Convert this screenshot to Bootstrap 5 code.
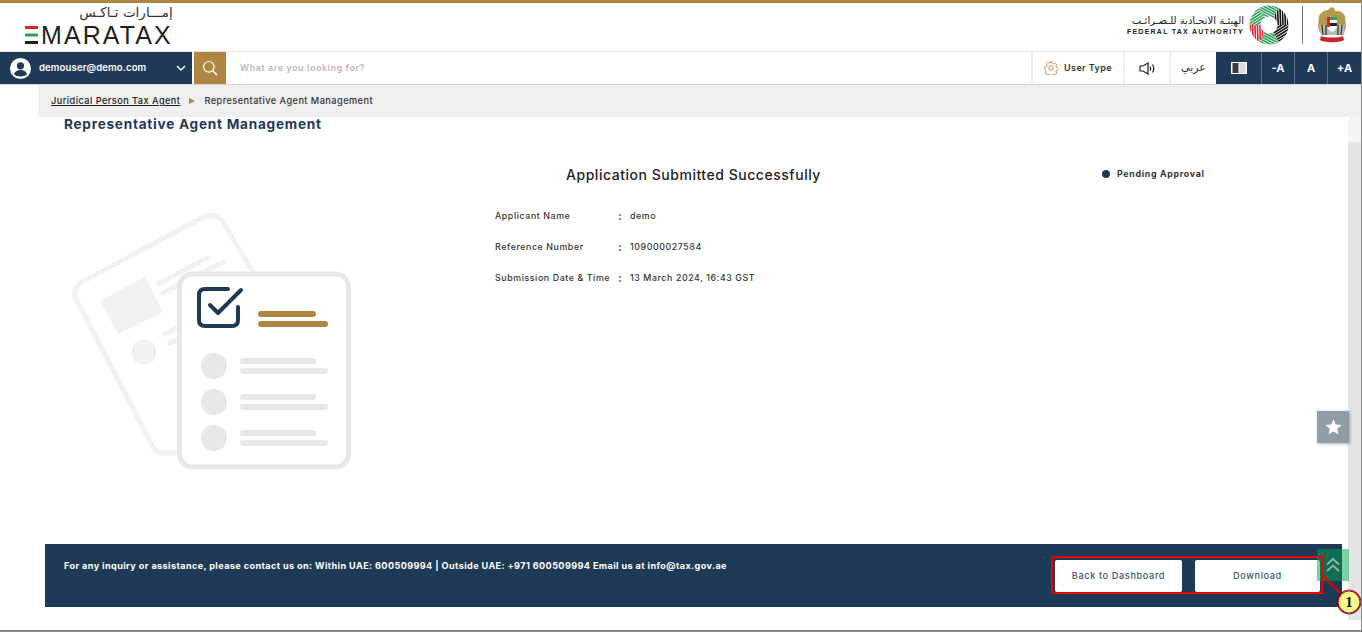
<!DOCTYPE html>
<html lang="en">
<head>
<meta charset="utf-8">
<title>Representative Agent Management</title>
<link href="https://cdn.jsdelivr.net/npm/bootstrap@5.3.0/dist/css/bootstrap.min.css" rel="stylesheet">
<style>
html,body{height:632px;overflow:hidden}
body{position:relative;font-family:Inter,"Open Sans","DejaVu Sans",sans-serif;color:#222;background:#fff;border-bottom:2px solid #8a8a8a;border-right:1px solid #8a8a8a}
.head-top{height:51px;border-top:3px solid #ae8641;padding:0 14px 4px 25px}
.logo-block{align-self:flex-start}
.logo-ar{font-family:"DejaVu Sans",sans-serif;font-size:13.5px;line-height:16px;text-align:right;color:#333;padding-top:1px}
.logo-en{font-family:"Liberation Sans",sans-serif;font-size:25px;line-height:22px;letter-spacing:2.1px;color:#231f20;gap:2px;margin-top:4px}
.fta-ar{font-family:"DejaVu Sans",sans-serif;font-size:10px;line-height:13px;color:#222;text-align:right}
.fta-en{font-family:"Liberation Sans",sans-serif;font-size:7px;letter-spacing:1.25px;line-height:9px;color:#222;font-weight:700;white-space:nowrap}
.fta-text{margin-right:5px}
.vsep{width:1px;height:38px;background:#777;margin:0 14px 0 13px}
.toolbar{height:34px;border-top:1px solid #e2e2e2;border-bottom:1px solid #d5d5d5}
.user-cell{width:192px;background:#1f3a57;color:#fff;font-size:9.6px;font-weight:600;letter-spacing:.1px;padding:0 6px 0 10px}
.search-cell{width:32px;margin-left:2px;background:#ae8641}
.search-txt{font-size:9px;font-weight:600;color:#b9b9b9;padding-left:14px;letter-spacing:.55px}
.t-cell{border-left:2px solid #efefef;font-size:9px;font-weight:600;color:#333}
.t-user{width:92px;gap:6px;letter-spacing:.4px}
.t-sound{width:46px}
.t-lang{width:47px;font-family:"DejaVu Sans",sans-serif;font-weight:400;font-size:11px}
.n-cell{background:#1f3a57;color:#fff;font-size:11px;font-weight:700;border-left:1px solid #5c7086}
.n-contrast{width:45px;border-left:0}
.n-small{width:33px}
.n-last{width:34px}
.crumb-band{height:32px;margin-left:38px;background:#efefef;font-size:9.2px;font-weight:500;letter-spacing:.45px;padding-left:13px;gap:9px;color:#333}
.crumb-band a{color:#222}
.crumb-arrow{width:0;height:0;border-left:6px solid #ae8641;border-top:3.5px solid transparent;border-bottom:3.5px solid transparent}
.main-wrap{height:514px}
.page-title{font-size:13.6px;font-weight:700;color:#1f3a57;padding-left:64px;line-height:15px;letter-spacing:.75px}
.content-zone{padding-top:34px}
.art-col{width:495px;padding:39px 0 0 70px}
.info-col{width:340px}
.done-title{font-size:14px;font-weight:500;letter-spacing:.53px;color:#222;line-height:18px;text-align:center;margin-bottom:25px;padding-left:57px;white-space:nowrap}
.info-row{font-size:8.8px;font-weight:500;height:31px;line-height:14px;letter-spacing:.6px;color:#333}
.info-k{width:123px}
.info-c{width:12px;font-weight:700;font-size:11px}
.status-col{padding:0 0 0 267px;font-size:8.8px;font-weight:700;letter-spacing:.7px;color:#333;gap:7px;line-height:16px;white-space:nowrap;height:18px;margin-top:-1px}
.status-dot{width:8px;height:8px;border-radius:50%;background:#1f3a57}
.foot-bar{position:absolute;left:45px;top:544px;width:1297px;height:63px;background:#1f3a57;color:#fff;font-size:9.1px;font-weight:700;letter-spacing:.4px;padding:15px 22px 0 19px}
.foot-btns{gap:13px;margin-top:1px}
.foot-btn{width:127px;height:32px;font-size:9.2px;font-weight:500;color:#42566e;letter-spacing:.6px;border-radius:2px;border:0;padding:0}
.foot-btn-b{width:125px}
.rail-top{position:absolute;right:0;top:116px;width:13px;height:26px;background:#f5f5f5}
.rail{position:absolute;right:0;top:142px;width:13px;height:478px;background:#e4e4e4}
.float-star{position:absolute;left:1317px;top:411px;width:32px;height:32px;background:#8f9dab;box-shadow:1px 1px 3px rgba(0,0,0,.3)}
.float-top{position:absolute;left:1317px;top:549px;width:32px;height:32px;background:rgba(0,160,80,.5)}
.note-frame{position:absolute;left:1051px;top:556px;width:272px;height:38px;border:2.5px solid #ee0000;pointer-events:none}
.note-line{position:absolute;left:0;top:0;width:1362px;height:632px;pointer-events:none}
</style>
</head>
<body>
<header class="head-top d-flex justify-content-between align-items-center">
  <div class="logo-block">
    <div class="logo-ar" dir="rtl">إمـــارات تـاكـس</div>
    <div class="logo-en d-flex align-items-center">
      <svg width="14" height="18" viewBox="0 0 14 18"><rect y="0" width="13" height="3" fill="#d8232a"/><rect y="7.500" width="13" height="3" fill="#2f9e58"/><rect y="15" width="13" height="3" fill="#231f20"/></svg>
      <span>MARATAX</span>
    </div>
  </div>
  <div class="d-flex align-items-center">
    <div class="fta-text">
      <div class="fta-ar" dir="rtl">الهيئـة الاتحـادية للـضـرائـب</div>
      <div class="fta-en">FEDERAL TAX AUTHORITY</div>
    </div>
    <svg width="40" height="40" viewBox="-20 -20 40 40" fill="none" stroke-width="1.600">
      <defs>
        <mask id="annulus"><circle r="19.500" fill="#fff"/><circle r="8.500" fill="#000"/></mask>
        <clipPath id="wedge"><path d="M0 0L-14.400-25H14.400z"/></clipPath>
        <g id="blade" clip-path="url(#wedge)"><path transform="rotate(28)" d="M-30 -2H30M-30 -4.400H30M-30 -6.800H30M-30 -9.200H30M-30 -11.600H30M-30 -14H30M-30 -16.400H30M-30 -18.800H30M-30 -21.200H30M-30 -23.600H30"/></g>
      </defs>
      <g mask="url(#annulus)">
        <use href="#blade" stroke="#2f9e58"/>
        <use href="#blade" stroke="#111" transform="rotate(60)"/>
        <use href="#blade" stroke="#111" transform="rotate(120)"/>
        <use href="#blade" stroke="#2f9e58" transform="rotate(180)"/>
        <use href="#blade" stroke="#e5232e" transform="rotate(240)"/>
        <use href="#blade" stroke="#2f9e58" transform="rotate(300)"/>
      </g>
    </svg>
    <div class="vsep"></div>
    <svg width="30" height="38" viewBox="0 0 30 38">
      <path d="M11 4l3-3 3 1 1 3c4-1 8 1 10 5l1 12-2 5H3l-2-6 1-11c2-4 5-6 9-6z" fill="#b89a4e"/>
      <path d="M2 19h26l-1 10H4z" fill="#b9b9b0"/>
      <path d="M5 19l1 10M9 19v10M21 19v10M25 19l-1 10" stroke="#3a3a2a" stroke-width="1.300"/>
      <path d="M10 11h10v9c0 3-3 5-5 6-2-1-5-3-5-6z" fill="#fff"/>
      <rect x="13" y="11" width="7" height="3" fill="#2f9e58"/><rect x="13" y="17" width="7" height="3" fill="#222"/>
      <rect x="10" y="11" width="3" height="10" fill="#d8232a"/>
      <path d="M4 30c4 2 18 2 22 0l1 4c-4 3-20 3-24 0z" fill="#c9252c"/>
    </svg>
  </div>
</header>
<nav class="toolbar d-flex align-items-stretch">
  <div class="user-cell d-flex align-items-center">
    <svg width="21" height="21" viewBox="0 0 21 21" class="me-2"><circle cx="10.500" cy="10.500" r="10.500" fill="#fff"/><circle cx="10.500" cy="7.800" r="3.600" fill="#1f3a57"/><path d="M4 16.500c1-3.600 3.500-4.600 6.500-4.600s5.500 1 6.500 4.600c-3.500 2.600-9.500 2.600-13 0z" fill="#1f3a57"/></svg>
    <span class="flex-grow-1">demouser@demo.com</span>
    <svg width="10" height="7" viewBox="0 0 10 7" fill="none" stroke="#fff" stroke-width="1.400"><path d="M1 1l4 4 4-4"/></svg>
  </div>
  <div class="search-cell d-flex align-items-center justify-content-center">
    <svg width="16" height="16" viewBox="0 0 16 16" fill="none" stroke="#fff" stroke-width="1.200"><circle cx="6.800" cy="6.800" r="5.300"/><path d="M10.700 10.700l4.300 4.300" stroke-width="1.600"/></svg>
  </div>
  <div class="search-txt flex-grow-1 d-flex align-items-center">What are you looking for?</div>
  <div class="t-cell t-user d-flex align-items-center justify-content-center">
    <svg width="14" height="14" viewBox="0 0 14 14" fill="none" stroke="#b98a4e" stroke-width=".9"><circle cx="7" cy="7" r="2.300"/><path d="M6 .8h2l.4 1.700 1.500.6 1.500-.9 1.400 1.400-.9 1.500.6 1.500 1.700.4v2l-1.700.4-.6 1.500.9 1.500-1.400 1.400-1.500-.9-1.500.6-.4 1.200H6l-.4-1.200-1.500-.6-1.500.9-1.400-1.400.9-1.500-.6-1.500L.8 8V6l1.700-.4.6-1.500-.9-1.500 1.400-1.400 1.500.9 1.500-.6z"/></svg>
    <span>User Type</span>
  </div>
  <div class="t-cell t-sound d-flex align-items-center justify-content-center">
    <svg width="17" height="13" viewBox="0 0 17 13" fill="none" stroke="#222" stroke-width="1.200"><path d="M1 4h3l5-3v11l-5-3H1z"/><path d="M11 4.500c.8 1.200.8 2.800 0 4M13.500 2.500c1.500 2.400 1.500 5.600 0 8"/></svg>
  </div>
  <div class="t-cell t-lang d-flex align-items-center justify-content-center" dir="rtl">عربي</div>
  <div class="n-cell n-contrast d-flex align-items-center justify-content-center">
    <svg width="16" height="12" viewBox="0 0 16 12"><rect width="16" height="12" fill="#fff"/><rect x="1.500" y="1" width="6" height="10" fill="#3d3d3d"/><rect x="8.500" y="1" width="6" height="10" fill="#d9d9d9"/></svg>
  </div>
  <div class="n-cell n-small d-flex align-items-center justify-content-center">-A</div>
  <div class="n-cell n-small d-flex align-items-center justify-content-center">A</div>
  <div class="n-cell n-last d-flex align-items-center justify-content-center">+A</div>
</nav>
<div class="crumb-band d-flex align-items-center">
  <a href="#">Juridical Person Tax Agent</a><span class="crumb-arrow"></span><span>Representative Agent Management</span>
</div>
<main class="main-wrap">
  <h1 class="page-title m-0">Representative Agent Management</h1>
  <div class="content-zone d-flex">
    <div class="art-col">
      <svg width="284" height="270" viewBox="70 205 284 270" fill="none">
        <path d="M253 272L223 222q-8-9-18-6L82 282q-9 6-7 15L153 447q5 7 12 6h12" stroke="#f1f1f1" stroke-width="5" stroke-linecap="round" stroke-linejoin="round"/>
        <path d="M100 301l45-24 18 35-45 22z" fill="#f1f1f1"/>
        <path d="M158 284l49-26M163 293l60-31M165 334l12-6M170 343l7-3" stroke="#f1f1f1" stroke-width="5" stroke-linecap="round"/>
        <circle cx="144" cy="352" r="13" fill="#f1f1f1"/>
        <rect x="179.500" y="274" width="169" height="193" rx="13" fill="#fff" stroke="#e7e7e7" stroke-width="5"/>
        <path d="M228 289H205q-6 0-6 6V320q0 6 6 6H232q6 0 6-6V307" stroke="#1f3a57" stroke-width="4" stroke-linecap="round"/>
        <path d="M210 305l8 8 23-23" stroke="#1f3a57" stroke-width="4" stroke-linecap="round" stroke-linejoin="round"/>
        <path d="M261 314H313M261 324H325" stroke="#ae8641" stroke-width="6" stroke-linecap="round"/>
        <g fill="#e7e7e7"><circle cx="214" cy="366" r="13"/><circle cx="214" cy="402" r="13"/><circle cx="214" cy="438" r="13"/></g>
        <path d="M243 361H313M243 371H325M243 397H313M243 407H325M243 433H313M243 443H325" stroke="#e7e7e7" stroke-width="6" stroke-linecap="round"/>
      </svg>
    </div>
    <div class="info-col">
      <div class="done-title">Application Submitted Successfully</div>
      <div class="info-row d-flex"><span class="info-k">Applicant Name</span><span class="info-c">:</span><span>demo</span></div>
      <div class="info-row d-flex"><span class="info-k">Reference Number</span><span class="info-c">:</span><span>109000027584</span></div>
      <div class="info-row d-flex"><span class="info-k">Submission Date &amp; Time</span><span class="info-c">:</span><span>13 March 2024, 16:43 GST</span></div>
    </div>
    <div class="status-col d-flex align-items-center"><span class="status-dot"></span><span>Pending Approval</span></div>
  </div>
</main>
<div class="rail-top"></div>
<div class="rail"></div>
<div class="foot-bar d-flex justify-content-between align-items-start">
  <div>For any inquiry or assistance, please contact us on: Within UAE: 600509994 | Outside UAE: +971 600509994 Email us at info@tax.gov.ae</div>
  <div class="foot-btns d-flex">
    <button type="button" class="btn btn-light bg-white foot-btn">Back to Dashboard</button>
    <button type="button" class="btn btn-light bg-white foot-btn foot-btn-b">Download</button>
  </div>
</div>
<div class="float-star d-flex align-items-center justify-content-center">
  <svg width="17" height="16" viewBox="0 0 17 16"><path d="M8.500 0l2.300 5.400 5.700.5-4.300 3.800 1.300 5.700-5-3-5 3 1.300-5.700L.5 5.900l5.700-.5z" fill="#fff"/></svg>
</div>
<div class="float-top d-flex align-items-center justify-content-center">
  <svg width="14" height="14" viewBox="0 0 14 14" fill="none" stroke="#8fb3a5" stroke-width="2"><path d="M1 6.500L7 1l6 5.500M1 13l6-5.500 6 5.500"/></svg>
</div>
<div class="note-frame"></div>
<svg class="note-line" viewBox="0 0 1362 632">
  <path d="M1322 575l18 18" stroke="#ee0000" stroke-width="1.800"/>
  <circle cx="1349" cy="602" r="11" fill="#ffff8c" stroke="#e60012" stroke-width="1.200"/>
  <circle cx="1349" cy="602" r="12" fill="none" stroke="#222" stroke-width=".8"/>
  <text x="1349" y="607" text-anchor="middle" font-family="Liberation Serif" font-size="15" font-weight="700" fill="#111">1</text>
</svg>
<script src="https://cdn.jsdelivr.net/npm/bootstrap@5.3.0/dist/js/bootstrap.bundle.min.js"></script>
</body>
</html>
